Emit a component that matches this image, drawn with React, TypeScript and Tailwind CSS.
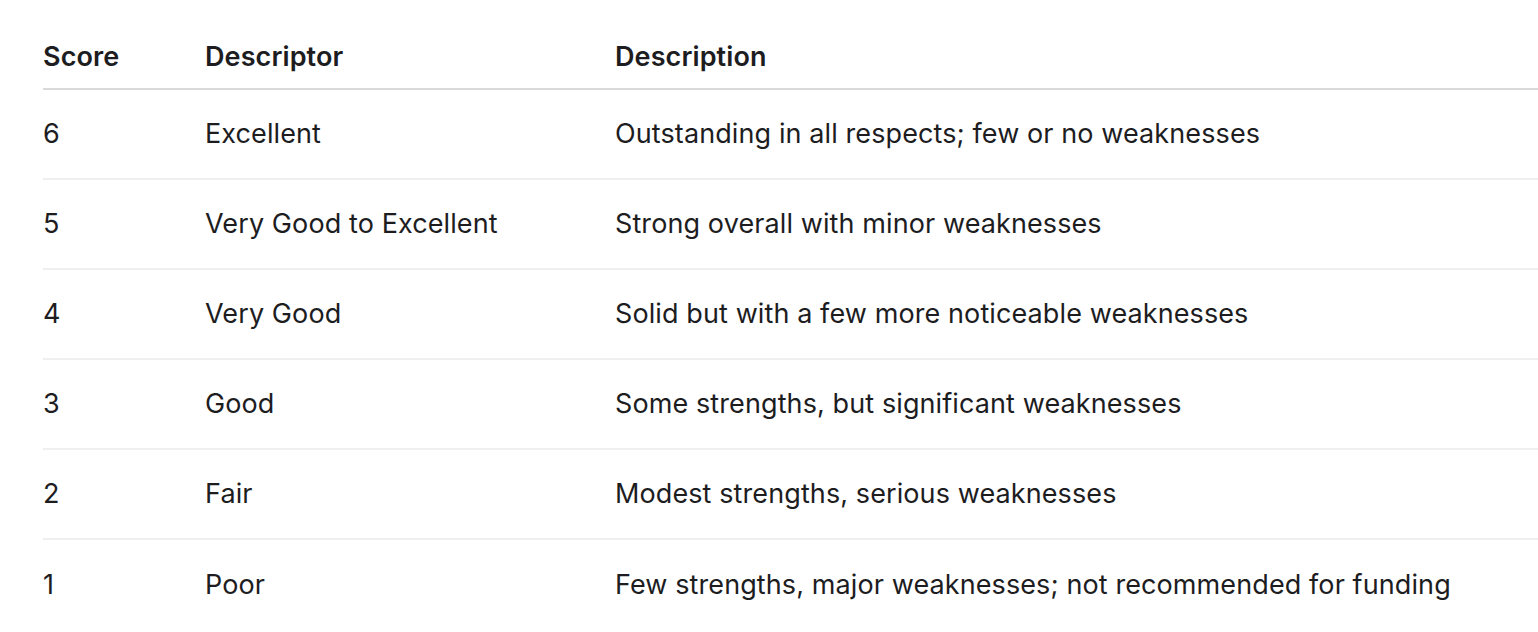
const rows = [
  { score: '6', descriptor: 'Excellent', description: 'Outstanding in all respects; few or no weaknesses' },
  { score: '5', descriptor: 'Very Good to Excellent', description: 'Strong overall with minor weaknesses' },
  { score: '4', descriptor: 'Very Good', description: 'Solid but with a few more noticeable weaknesses' },
  { score: '3', descriptor: 'Good', description: 'Some strengths, but significant weaknesses' },
  { score: '2', descriptor: 'Fair', description: 'Modest strengths, serious weaknesses' },
  { score: '1', descriptor: 'Poor', description: 'Few strengths, major weaknesses; not recommended for funding' },
];

const App = () => {
  return (
    <div className="min-h-screen bg-white pl-[43px] font-['Inter',sans-serif] text-[27px] tracking-[0.1px] text-[#1d1d1f]">
      {/* Header */}
      <div className="flex h-[90px] items-center border-b-2 border-[#dadada] pt-[26px] font-semibold">
        <div className="w-[162px]">Score</div>
        <div className="w-[410px]">Descriptor</div>
        <div className="flex-1">Description</div>
      </div>

      {/* Body */}
      {rows.map((row, i) => (
        <div
          key={row.score}
          className={`flex h-[90px] items-center ${i < rows.length - 1 ? 'border-b-2 border-[#efefef]' : ''}`}
        >
          <div className="w-[162px]">{row.score}</div>
          <div className="w-[410px]">{row.descriptor}</div>
          <div className="flex-1">{row.description}</div>
        </div>
      ))}
    </div>
  );
};

export default App;
